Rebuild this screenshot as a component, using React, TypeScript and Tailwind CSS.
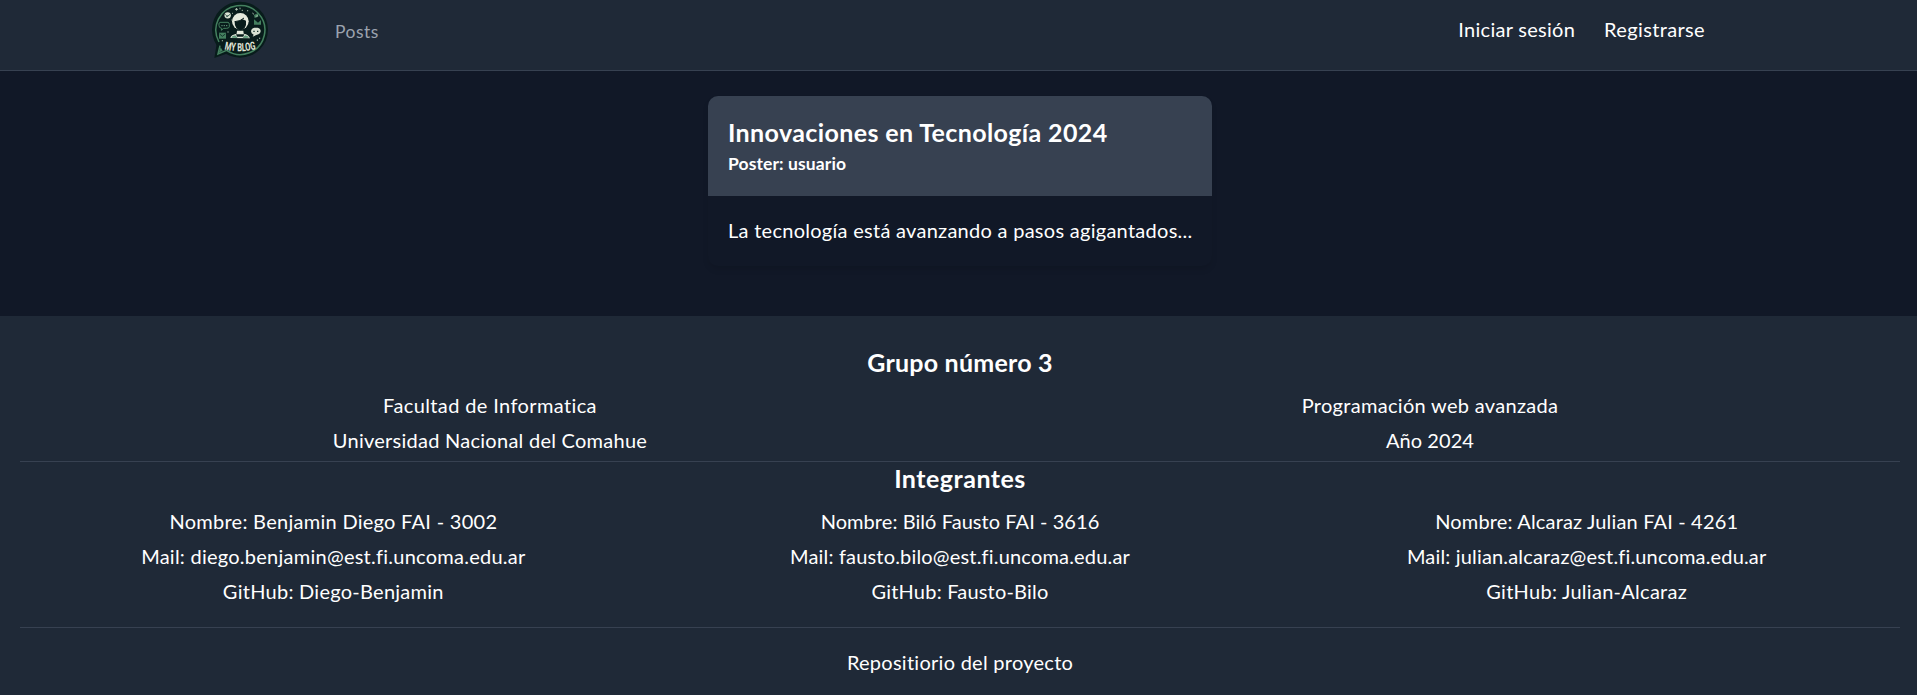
type Line = { text: string; spacing: string };

const members: Line[][] = [
  [
    { text: "Nombre: Benjamin Diego FAI - 3002", spacing: "tracking-[0.278px]" },
    { text: "Mail: diego.benjamin@est.fi.uncoma.edu.ar", spacing: "tracking-[0.25px]" },
    { text: "GitHub: Diego-Benjamin", spacing: "tracking-[0.265px]" },
  ],
  [
    { text: "Nombre: Biló Fausto FAI - 3616", spacing: "tracking-[0.063px]" },
    { text: "Mail: fausto.bilo@est.fi.uncoma.edu.ar", spacing: "tracking-[0.18px]" },
    { text: "GitHub: Fausto-Bilo", spacing: "tracking-[0.204px]" },
  ],
  [
    { text: "Nombre: Alcaraz Julian FAI - 4261", spacing: "tracking-[0.164px]" },
    { text: "Mail: julian.alcaraz@est.fi.uncoma.edu.ar", spacing: "tracking-[0.165px]" },
    { text: "GitHub: Julian-Alcaraz", spacing: "tracking-[0.276px]" },
  ],
];

const course: Line[][] = [
  [
    { text: "Facultad de Informatica", spacing: "tracking-[0.38px]" },
    { text: "Universidad Nacional del Comahue", spacing: "tracking-[0.26px]" },
  ],
  [
    { text: "Programación web avanzada", spacing: "tracking-[0.306px]" },
    { text: "Año 2024", spacing: "tracking-[0.069px]" },
  ],
];

function Logo() {
  return (
    <svg viewBox="0 0 240 210" className="h-[70px] w-20" role="img" aria-label="My Blog">
      <path d="M50 131 L43 174 L84 160 Z" fill="#081c1b" />
      <circle cx="120" cy="89" r="84" fill="#081c1b" />
      <path
        d="M57 126 A73.500 73.500 0 1 1 80 151 L54 162 L60 137"
        fill="none"
        stroke="#44805f"
        strokeWidth="4.500"
      />
      <path d="M62 142 L68 152 L56 158 Z" fill="#44805f" />

      <path
        d="M91 114 Q93 104 110 101 L111 92 H130 L131 101 Q146 103 150 115 Z"
        fill="#e4e9dc"
      />
      <path d="M108 103 H133 L130 110 H111 Z" fill="#081c1b" />
      <path d="M94 113 Q96 107 106 106 L113 114 Z M147 113 Q144 107 135 106 L128 114 Z" fill="#5d9878" />
      <circle cx="121" cy="64" r="25" fill="#e4e9dc" />
      <path
        d="M104 64 Q116 66 128 58 L138 62 Q140 76 134 84 Q121 98 109 84 Q103 77 104 64 Z"
        fill="#081c1b"
      />
      <path d="M104 65 Q122 64 132 54" fill="none" stroke="#081c1b" strokeWidth="3" />

      <circle cx="83" cy="46" r="9.500" fill="#d9e2d3" />
      <path d="M76 43 L82 50 L91 42 M78 52 L85 45" fill="none" stroke="#294c42" strokeWidth="2.500" />
      <path
        d="M60 67 H84 Q88 68 88 73 V80 Q87 85 80 85 H71 L64 91 L65 85 Q57 84 57 77 V72 Q57 68 60 67 Z"
        fill="none"
        stroke="#44805f"
        strokeWidth="3"
      />
      <path d="M64 77 H68 M71 77 H75 M78 77 H82" stroke="#66977d" strokeWidth="3" />
      <rect x="57" y="98" width="21" height="18" fill="#44805f" />
      <path d="M59 102 L67 109 L76 102" fill="none" stroke="#0c2924" strokeWidth="2.500" />
      <path d="M162 45 L174 39 L175 50 L164 54 Z" fill="#44805f" />
      <path d="M157 39 L162 43 M167 49 L174 47" stroke="#b9ccb9" strokeWidth="2.500" />
      <path d="M162 58 V74 H183 V60 L174 68 Z" fill="#44805f" />
      <path
        d="M163 83 H173 Q182 85 182 94 Q181 103 171 104 L158 110 L161 104 Q153 101 153 94 Q154 85 163 83 Z"
        fill="#d9e2d3"
      />
      <path d="M160 94 H164 M171 94 H175" stroke="#14332c" strokeWidth="4" />
      <path
        d="M105 28 H114 M109.500 24 V32 M120 23 V28 M125 31 H129 M143 30 V34 M96 40 H99 M94 60 H97 M67 120 V124 M84 94 V98 M172 118 V123 M179 113 V117"
        stroke="#b9ccb9"
        strokeWidth="2.500"
      />
      <path id="logo-baseline" d="M73 148 Q121 160 172 146" fill="none" />
      <text className="font-['Roboto',sans-serif] text-[34px] font-bold" fill="#e4e9dc">
        <textPath href="#logo-baseline" textLength="96" lengthAdjust="spacingAndGlyphs">
          MY BLOG
        </textPath>
      </text>
    </svg>
  );
}

function Column({ lines }: { lines: Line[] }) {
  return (
    <div className="text-center text-[20px] leading-[35px]">
      {lines.map((line) => (
        <p key={line.text} className={line.spacing}>
          {line.text}
        </p>
      ))}
    </div>
  );
}

export default function App() {
  return (
    <div className="h-[695px] overflow-hidden bg-[#111827] font-['Lato',sans-serif] text-white">
      <div className="flex h-full w-[1920px] flex-col">
        <nav className="flex h-[71px] shrink-0 items-start border-b border-[#374151] bg-[#1f2937] pl-[200px] pr-[215px]">
          <Logo />
          <a className="ml-[55px] mt-[17px] text-[17.5px] leading-[30px] tracking-[0.5px] text-[#9ca3af]">
            Posts
          </a>
          <div className="ml-auto mt-[14px] flex gap-[29px] text-[20px] leading-[30px]">
            <a className="tracking-[0.275px]">Iniciar sesión</a>
            <a className="tracking-[0.359px]">Registrarse</a>
          </div>
        </nav>

        <main className="flex h-[245px] shrink-0 items-start justify-center pt-[25px]">
          <article className="h-[170px] w-[504px] overflow-hidden rounded-[10px] shadow-[0_4px_7px_-1px_rgba(0,0,0,0.11)]">
            <header className="h-[100px] bg-[#374151] px-5 pt-[19px]">
              <h2 className="text-[25px] font-bold leading-[35px] tracking-[0.385px]">
                Innovaciones en Tecnología 2024
              </h2>
              <p className="mt-px text-[17.5px] font-bold leading-[25px] tracking-[0.1px]">
                Poster: usuario
              </p>
            </header>
            <p className="whitespace-nowrap px-5 pt-[19px] text-[20px] leading-[30px] tracking-[0.277px]">
              La tecnología está avanzando a pasos agigantados...
            </p>
          </article>
        </main>

        <footer className="grow bg-[#1f2937] px-5 pt-[29px]">
          <h3 className="text-center text-[25px] font-bold leading-[35px] tracking-[0.22px]">
            Grupo número 3
          </h3>
          <div className="mt-2 grid grid-cols-2">
            {course.map((lines) => (
              <Column key={lines[0].text} lines={lines} />
            ))}
          </div>
          <hr className="mt-[3px] border-[#374151]" />
          <h3 className="-mt-px text-center text-[25px] font-bold leading-[35px] tracking-[0.5px]">
            Integrantes
          </h3>
          <div className="mt-2 grid grid-cols-3">
            {members.map((lines) => (
              <Column key={lines[0].text} lines={lines} />
            ))}
          </div>
          <hr className="mt-[18px] border-[#374151]" />
          <p className="mt-[17px] text-center text-[20px] leading-[35px] tracking-[0.266px]">
            Repositiorio del proyecto
          </p>
        </footer>
      </div>
    </div>
  );
}
